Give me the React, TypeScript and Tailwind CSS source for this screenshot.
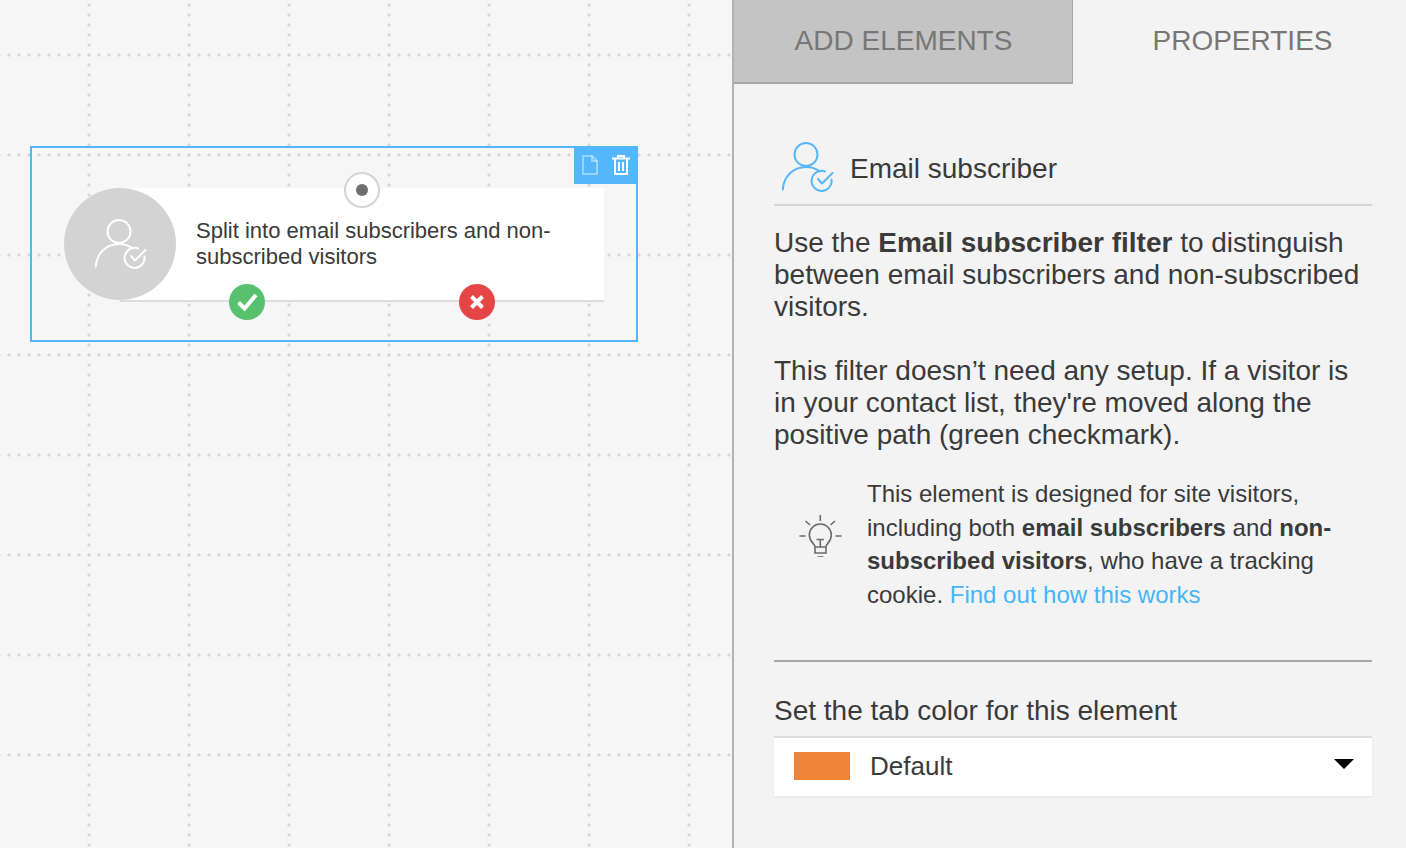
import React from 'react';

function UserCheck({ className }: { className: string }) {
  return (
    <svg className={className} viewBox="0 0 52 52" fill="none" stroke="currentColor" strokeWidth="2" strokeLinecap="round" strokeLinejoin="round">
      <circle cx="24" cy="12.5" r="11.5" />
      <path d="M0.8 47.5C1.5 35 11 25 24 25C29 25 34 26.5 38 29.5" />
      <path d="M49.5 37.5A10 10 0 1 1 43 29.5" />
      <path d="M36 37L40 41.5L50.5 31" />
    </svg>
  );
}

function Bulb() {
  return (
    <svg className="w-[44px] h-[44px] text-[#6b6b6b]" viewBox="18 13 44 44" fill="none" stroke="currentColor" strokeWidth="1.6">
      <path d="M40.3 15V21M19.5 36H25.5M55.5 36H61.5M25.5 21L30 25M55 21L50.5 25" />
      <path d="M35 53V46.5C35 44 29.3 42 29.3 35A11 11 0 0 1 51.3 35C51.3 42 46 44 46 46.5V53H35Z" />
      <path d="M36.5 39.5H44M40.3 39.5V46.5M35 47H46M37.5 57H43.5" />
    </svg>
  );
}

function Canvas() {
  return (
    <div className="relative w-[732px] h-full shrink-0 bg-[#f6f6f6] bg-[radial-gradient(circle,#d6d6d6_1.2px,transparent_1.9px),radial-gradient(circle,#d6d6d6_1.2px,transparent_1.9px)] bg-[size:10px_100px,100px_10px] bg-[position:4px_5px,39px_0px]">
      {/* selected node */}
      <div className="absolute left-[30px] top-[146px] w-[608px] h-[196px] border-2 border-[#55b7fb]">
        <div className="absolute right-[-2px] top-[-1px] w-[64px] h-[37px] bg-[#55b7fb] flex items-center gap-[14px] pl-[8px] pb-[2px]">
          <svg className="w-[16px] h-[20px] text-white/40" viewBox="0 0 16 20" fill="none" stroke="currentColor" strokeWidth="2">
            <path d="M1 1H10L15 6V19H1V1Z" />
            <path d="M10 1V6H15" />
          </svg>
          <svg className="w-[18px] h-[20px] text-white" viewBox="0 0 18 20" fill="none" stroke="currentColor" strokeWidth="2">
            <path d="M0 3.5H18M6 3V1H12V3M3 4V19H15V4M7 7V16M11 7V16" />
          </svg>
        </div>

        <div className="absolute left-[32px] top-[40px] w-[540px] h-[114px] flex">
          <div className="absolute left-[56px] right-0 top-0 h-[114px] bg-white border-b-2 border-[#dcdcdc]" />
          <div className="relative w-[112px] h-[112px] shrink-0 rounded-full bg-[#d3d3d3] flex items-center justify-center text-white">
            <UserCheck className="w-[52px] h-[52px] mt-[1px] ml-[2px]" />
          </div>
          <p className="relative ml-[20px] mt-[30px] w-[372px] text-[22px] leading-[26px] text-[#3a3a3a]">
            Split into email subscribers and non-subscribed visitors
          </p>
        </div>

        <div className="absolute left-[312px] top-[24px] w-[36px] h-[36px] rounded-full bg-white border-2 border-[#d5d5d5] flex items-center justify-center">
          <div className="w-[12px] h-[12px] rounded-full bg-[#6f6f6f]" />
        </div>
        <div className="absolute left-[197px] top-[136px] w-[36px] h-[36px] rounded-full bg-[#58c16f] flex items-center justify-center">
          <svg className="w-[24px] h-[24px] text-white" viewBox="0 0 24 24" fill="none" stroke="currentColor" strokeWidth="4">
            <path d="M3.5 12.5L9.5 18.5L21 5" />
          </svg>
        </div>
        <div className="absolute left-[427px] top-[136px] w-[36px] h-[36px] rounded-full bg-[#e54545] flex items-center justify-center">
          <svg className="w-[14px] h-[14px] text-white" viewBox="0 0 14 14" fill="none" stroke="currentColor" strokeWidth="4">
            <path d="M1.5 1.5L12.5 12.5M12.5 1.5L1.5 12.5" />
          </svg>
        </div>
      </div>
    </div>
  );
}

function Panel() {
  return (
    <div className="w-[674px] h-full border-l-2 border-[#b2b2b2] bg-[#f3f3f3] text-[#3a3a3a]">
      {/* tabs */}
      <div className="flex h-[84px] text-[28px] text-[#777]">
        <div className="w-[339px] bg-[#c4c4c4] border-b-2 border-r border-[#a8a8a8] flex items-center justify-center pl-[1px]">ADD ELEMENTS</div>
        <div className="flex-1 flex items-center justify-center pb-[2px] pl-[6px]">PROPERTIES</div>
      </div>

      <div className="pl-[40px] pr-[34px]">
        <div className="flex items-center h-[122px] pt-[48px] border-b-2 border-[#d5d5d5]">
          <UserCheck className="w-[52px] h-[52px] ml-[8px] text-[#55b7fb]" />
          <span className="ml-[16px] text-[28px] mt-[2px]">Email subscriber</span>
        </div>

        <p className="mt-[21px] text-[28px] leading-[32px]">
          Use the <b>Email subscriber filter</b> to distinguish between email subscribers and non-subscribed visitors.
        </p>
        <p className="mt-[32px] text-[28px] leading-[32px]">
          This filter doesn’t need any setup. If a visitor is in your contact list, they're moved along the positive path (green checkmark).
        </p>

        <div className="flex mt-[26px]">
          <div className="w-[93px] pl-[24px] pt-[36px] shrink-0"><Bulb /></div>
          <p className="text-[24px] leading-[33.6px]">
            This element is designed for site visitors, including both <b>email subscribers</b> and <b>non-subscribed visitors</b>, who have a tracking cookie. <span className="text-[#45b5fa]">Find out how this works</span>
          </p>
        </div>

        <div className="mt-[49px] border-t-2 border-[#a8a8a8]" />
        <div className="mt-[33px] text-[28px] leading-[32px]">Set the tab color for this element</div>
        <div className="mt-[9px] h-[60px] bg-white border-t-2 border-[#dedede] shadow-[0_1px_2px_rgba(0,0,0,0.06)] flex items-center pl-[20px] pr-[18px] pb-[2px]">
          <div className="w-[56px] h-[28px] bg-[#f0853a]" />
          <span className="ml-[20px] text-[26px]">Default</span>
          <div className="ml-auto mb-[4px] w-0 h-0 border-x-[10px] border-x-transparent border-t-[10px] border-t-black" />
        </div>
      </div>
    </div>
  );
}

export default function App() {
  return (
    <div className="flex w-[1406px] h-[848px] overflow-hidden font-['Liberation_Sans',sans-serif]">
      <Canvas />
      <Panel />
    </div>
  );
}
